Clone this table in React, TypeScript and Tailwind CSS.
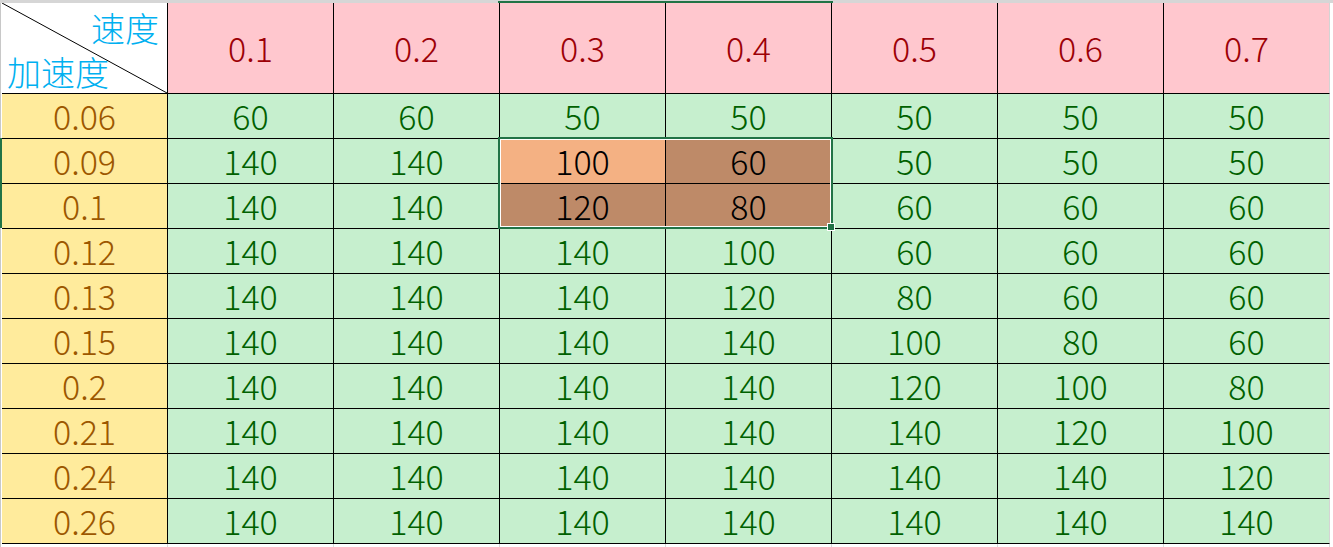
import React from "react";

const speeds = ["0.1", "0.2", "0.3", "0.4", "0.5", "0.6", "0.7"];
const rows: [string, number[]][] = [
  ["0.06", [60, 60, 50, 50, 50, 50, 50]],
  ["0.09", [140, 140, 100, 60, 50, 50, 50]],
  ["0.1", [140, 140, 120, 80, 60, 60, 60]],
  ["0.12", [140, 140, 140, 100, 60, 60, 60]],
  ["0.13", [140, 140, 140, 120, 80, 60, 60]],
  ["0.15", [140, 140, 140, 140, 100, 80, 60]],
  ["0.2", [140, 140, 140, 140, 120, 100, 80]],
  ["0.21", [140, 140, 140, 140, 140, 120, 100]],
  ["0.24", [140, 140, 140, 140, 140, 140, 120]],
  ["0.26", [140, 140, 140, 140, 140, 140, 140]],
];

function cellClass(r: number, c: number, last: boolean) {
  const base =
    "w-[166px] h-full flex items-center justify-center pb-[1px] border-b border-black " +
    (last ? "border-r border-r-[#d4d4d4] " : "border-r ");
  if (r === 1 && c === 2) return base + "bg-[#f4b183] text-black";
  if ((r === 1 && c === 3) || (r === 2 && (c === 2 || c === 3)))
    return base + "bg-[#be8a68] text-black";
  return base + "bg-[#c6efce] text-[#006100]";
}

export default function App() {
  return (
    <div className="relative w-[1333px] h-[547px] bg-white overflow-hidden font-['Noto_Sans_CJK_SC',sans-serif] font-light text-[34px] leading-none">
      {/* top strip */}
      <div className="flex h-[3px] bg-[#d6d6d6]">
        <div className="w-[498px]" />
        <div className="w-[335px] mt-[1px] bg-[#217346]" />
      </div>
      <div className="flex">
        {/* left gutter */}
        <div className="w-[2px] flex flex-col">
          <div className="h-[135px] border-l border-[#c8c8c8] bg-white" />
          <div className="h-[90px] bg-[#217346]" />
          <div className="h-[322px] border-l border-[#c8c8c8] bg-white" />
        </div>
        <div className="flex flex-col">
          {/* header */}
          <div className="flex h-[91px]">
            <div className="relative w-[166px] h-full bg-white border-r border-b border-black flex flex-col justify-between pt-[8px] pb-[4px] text-[#00b0f0]">
              <svg className="absolute inset-0" width="165" height="90" viewBox="0 0 165 90">
                <line x1="0" y1="0" x2="165" y2="90" stroke="#000" strokeWidth="1" />
              </svg>
              <div className="relative self-end pr-[8px]">速度</div>
              <div className="relative self-start pl-[5px]">加速度</div>
            </div>
            {speeds.map((s, i) => (
              <div
                key={s}
                className={
                  "w-[166px] h-full flex items-center justify-center bg-[#ffc7ce] text-[#9c0006] border-b border-black " +
                  (i === 6 ? "border-r border-r-[#d4d4d4]" : "border-r")
                }
              >
                {s}
              </div>
            ))}
          </div>
          {rows.map(([a, vals], r) => (
            <div key={a} className="flex h-[45px]">
              <div className="w-[166px] h-full flex items-center justify-center pb-[1px] bg-[#ffeb9c] text-[#9c5700] border-r border-b border-black">
                {a}
              </div>
              {vals.map((v, c) => (
                <div key={c} className={cellClass(r, c, c === 6)}>
                  {v}
                </div>
              ))}
            </div>
          ))}
          {/* below table */}
          <div className="flex h-[10px]">
            {Array.from({ length: 8 }).map((_, i) => (
              <div key={i} className="w-[166px] h-full border-r border-[#d9d9d9]" />
            ))}
          </div>
        </div>
      </div>
      {/* selection overlay */}
      <div className="absolute left-[498px] top-[137px] w-[335px] h-[92px] border-2 border-[#217346] pointer-events-none">
        <div className="absolute inset-0 border border-white" />
      </div>
      <div className="absolute left-[827px] top-[223px] w-[8px] h-[8px] bg-[#217346] border border-white" />
    </div>
  );
}
